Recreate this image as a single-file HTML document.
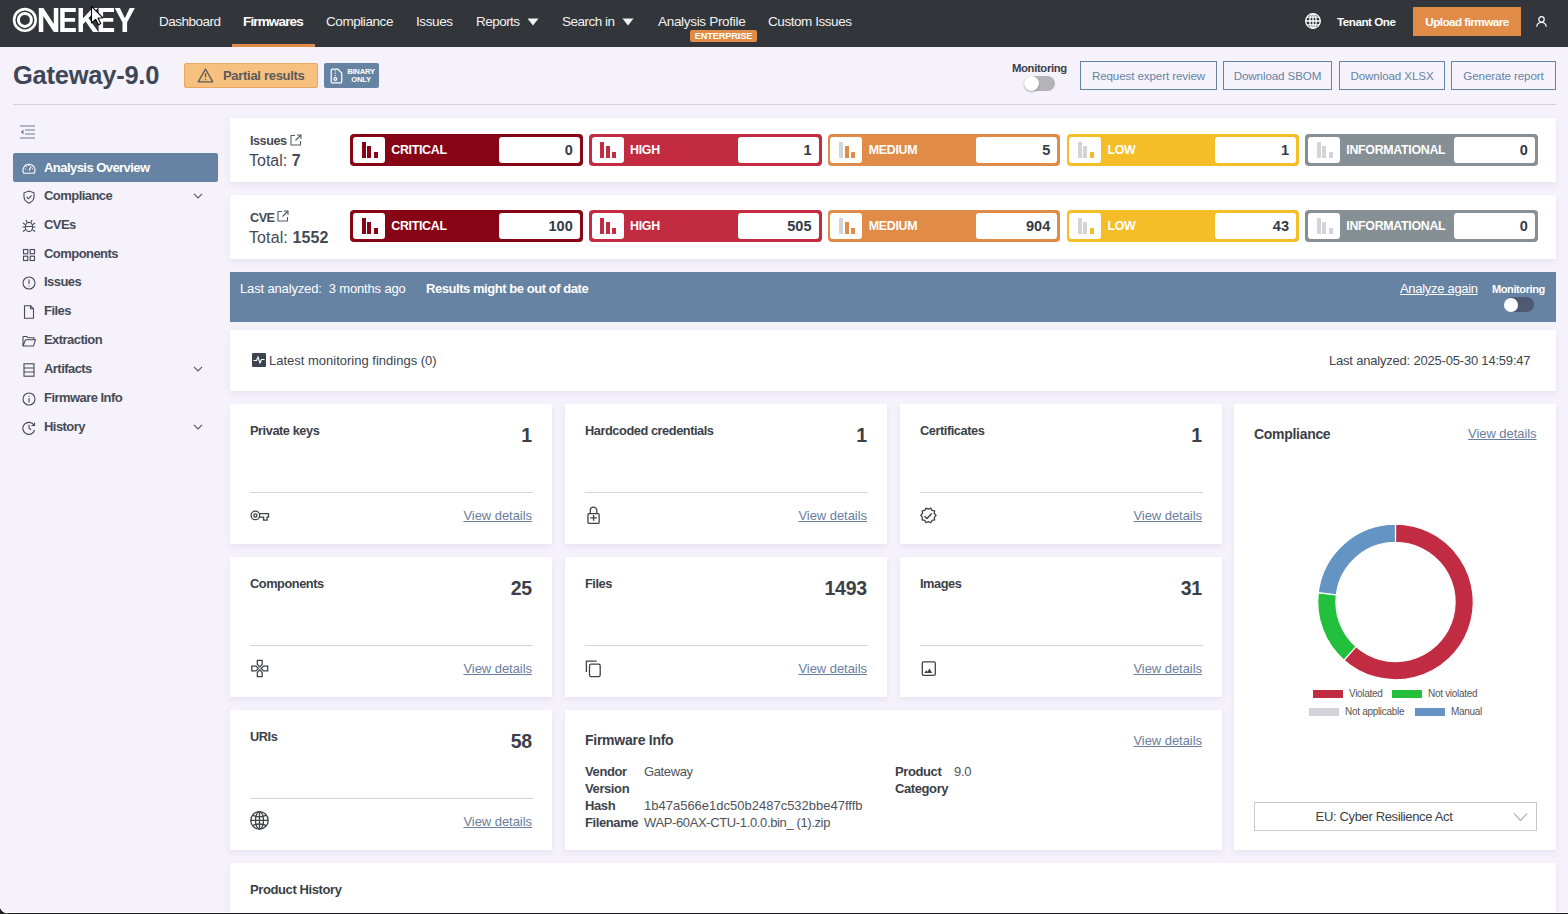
<!DOCTYPE html>
<html><head><meta charset="utf-8">
<style>
*{box-sizing:border-box;margin:0;padding:0}
html,body{width:1568px;height:914px;overflow:hidden}
body{background:#f5f2fc;font-family:"Liberation Sans",sans-serif;color:#3d4450;position:relative}
.a{position:absolute;white-space:nowrap}
#hdr{position:absolute;left:0;top:0;width:1568px;height:47px;background:#32363b}
.nav{position:absolute;top:13.5px;font-size:13.5px;color:#f2f2f2;line-height:16px}
.card{position:absolute;background:#fff;box-shadow:0 3px 6px rgba(120,110,160,0.10)}
.sev{position:absolute;width:232.5px;height:32px;border-radius:4px}
.sev .ic{position:absolute;left:2.6px;top:2.6px;width:32px;height:26.4px;background:#fff;border-radius:3px}
.sev .ic i{position:absolute;bottom:5px;width:4px}
.sev .lb{position:absolute;left:41px;top:9px;font-size:12.4px;font-weight:700;color:#fff;line-height:14px;letter-spacing:-0.3px}
.sev .nb{position:absolute;right:3px;top:2.6px;width:81px;height:26.4px;background:#fff;border-radius:3px;text-align:right;padding-right:7px;font-size:14.5px;font-weight:700;color:#333a45;line-height:27px}
.side{position:absolute;left:44px;font-size:13px;font-weight:700;color:#454a55;line-height:16px;letter-spacing:-0.55px}
.sico{position:absolute;left:21.5px;width:14px;height:14px}
.chev{position:absolute;left:193px;width:10px;height:6px}
.btn{position:absolute;top:61px;height:29px;border:1.5px solid #6783a3;color:#6783a3;font-size:11.6px;text-align:center;line-height:28px;letter-spacing:-0.1px}
.ct{position:absolute;left:20px;top:19px;font-size:12.8px;font-weight:700;color:#3b3f48;letter-spacing:-0.45px;line-height:16px}
.cn{position:absolute;right:20px;top:18.5px;font-size:19.5px;font-weight:700;color:#3b3f48;line-height:24px;letter-spacing:-0.2px}
.cd{position:absolute;left:20px;right:19px;top:88px;height:1px;background:#d4d4d8}
.vd{position:absolute;right:20px;top:104px;font-size:13px;color:#6a7e9e;text-decoration:underline;line-height:16px;letter-spacing:-0.05px}
.cico{position:absolute;left:20px;top:104px;width:20px;height:16px}
</style></head><body>

<div id="hdr">
<svg class="a" style="left:0;top:0" width="140" height="40" viewBox="0 0 140 40">
<g fill="#fff">
<circle cx="24.9" cy="19.9" r="10.8" fill="none" stroke="#fff" stroke-width="2.6"/><circle cx="24.9" cy="19.9" r="6.5" fill="none" stroke="#fff" stroke-width="3"/>

<path d="M38.8 7.9h4.6l10.4 16.2V7.9h4.5v24.1h-4.5L43.3 15.9v16.1h-4.5z"/>
<path d="M60.2 7.9h15.6v4h-11.1v6h10.4v3.8h-10.4v6.3h11.2v4h-15.7z"/>
<path d="M78.5 7.9h4.5v10.4l9.6-10.4h5.3l-9.5 10.2l10 13.9h-5.4l-7.3-10.6l-2.7 2.8v7.8h-4.5z"/>
<path d="M98.6 7.9h15.4v4h-10.9v6h10.2v3.8h-10.2v6.3h11v4h-15.5z"/>
<path d="M114.8 7.9h5.1l4.9 10.4l4.9-10.4h5.1l-7.7 14.6v9.5h-4.6v-9.5z"/>
</g>
<path d="M91.5 6.3v16.6l4.1-3.6l3 5.4l2.2-1.1l-2.8-5.3l5-0.5z" fill="#fff" stroke="#000" stroke-width="1.1" stroke-linejoin="round"/>
</svg>
<div class="nav" style="left:159px;letter-spacing:-0.5px">Dashboard</div>
<div class="nav" style="left:243px;font-weight:700;color:#fff;letter-spacing:-0.85px">Firmwares</div>
<div class="a" style="left:232px;top:44px;width:83px;height:3px;background:#e08c48"></div>
<div class="nav" style="left:326px;letter-spacing:-0.43px">Compliance</div>
<div class="nav" style="left:416px;letter-spacing:-0.4px">Issues</div>
<div class="nav" style="left:476px;letter-spacing:-0.53px">Reports</div>
<svg class="a" style="left:527px;top:18px" width="12" height="8"><path d="M0.5 0.5h11l-5.5 7z" fill="#f2f2f2"/></svg>
<div class="nav" style="left:562px;letter-spacing:-0.5px">Search in</div>
<svg class="a" style="left:622px;top:18px" width="12" height="8"><path d="M0.5 0.5h11l-5.5 7z" fill="#f2f2f2"/></svg>
<div class="nav" style="left:658px;letter-spacing:-0.31px">Analysis Profile</div>
<div class="a" style="left:690px;top:30px;width:67px;height:12px;background:#e08c48;border-radius:2px;color:#fff;font-size:9.2px;font-weight:700;line-height:12px;text-align:center;letter-spacing:-0.1px">ENTERPRISE</div>
<div class="nav" style="left:768px;letter-spacing:-0.44px">Custom Issues</div>
<svg class="a" style="left:1304px;top:12px" width="18" height="18" viewBox="0 0 18 18" fill="none" stroke="#fff" stroke-width="1.3"><circle cx="9" cy="9" r="7.3"/><ellipse cx="9" cy="9" rx="3.2" ry="7.3"/><path d="M1.7 9h14.6M9 1.7v14.6M2.8 5.2h12.4M2.8 12.8h12.4"/></svg>
<div class="a" style="left:1337px;top:14.8px;font-size:11.6px;font-weight:700;color:#fff;line-height:14px;letter-spacing:-0.45px">Tenant One</div>
<div class="a" style="left:1413px;top:7px;width:108px;height:29px;background:#e08c48;color:#fff;font-size:11.8px;font-weight:700;line-height:31px;text-align:center;letter-spacing:-0.6px">Upload firmware</div>
<svg class="a" style="left:1536px;top:16px" width="11" height="11" viewBox="0 0 11 11" fill="none" stroke="#fff" stroke-width="1.2"><circle cx="5.5" cy="3.4" r="2.7"/><path d="M0.8 10.8c0-2.8 2-4.3 4.7-4.3s4.7 1.5 4.7 4.3"/></svg>
</div>


<!-- title row -->
<div class="a" style="left:13px;top:60px;font-size:25.5px;font-weight:700;color:#3d4756;line-height:30px;letter-spacing:-0.25px">Gateway-9.0</div>
<div class="a" style="left:184px;top:63px;width:134px;height:25px;background:#f6c17e;border:1px solid #eaa860;border-radius:2px"></div>
<svg class="a" style="left:197px;top:68px" width="17" height="15" viewBox="0 0 17 15" fill="none" stroke="#5b5b5b" stroke-width="1.3"><path d="M8.5 1.2L15.8 13.8H1.2z" stroke-linejoin="round"/><path d="M8.5 5.3v4.3M8.5 11v1.2"/></svg>
<div class="a" style="left:223px;top:68px;font-size:13px;font-weight:700;color:#5a5a5c;line-height:16px;letter-spacing:-0.3px">Partial results</div>
<div class="a" style="left:324px;top:63px;width:55px;height:25px;background:#6783a3;border-radius:2px"></div>
<svg class="a" style="left:330px;top:67.5px" width="13" height="16" viewBox="0 0 13 16" fill="none" stroke="#fff" stroke-width="1.2"><path d="M1.2 2.2a1 1 0 0 1 1-1h5.6l3.9 3.9v8.7a1 1 0 0 1-1 1H2.2a1 1 0 0 1-1-1z"/><path d="M5.2 2.2v1.2M5.2 4.6v1.2M5.2 7v1.2" stroke-width="1"/><circle cx="5.3" cy="11" r="1.4"/></svg>
<div class="a" style="left:346px;top:68px;font-size:7.6px;font-weight:700;color:#fff;line-height:8px;text-align:center;width:30px;letter-spacing:-0.2px">BINARY<br>ONLY</div>

<div class="a" style="left:1012px;top:62px;font-size:11.3px;font-weight:700;color:#3d3f47;line-height:13px;letter-spacing:-0.35px">Monitoring</div>
<div class="a" style="left:1024px;top:76px;width:31px;height:15px;background:#b4b4b8;border-radius:8px"></div>
<div class="a" style="left:1024px;top:76px;width:15px;height:15px;background:#fff;border-radius:50%;box-shadow:0 1px 2px rgba(0,0,0,0.3)"></div>
<div class="btn" style="left:1080px;width:137px">Request expert review</div>
<div class="btn" style="left:1223px;width:109px">Download SBOM</div>
<div class="btn" style="left:1339px;width:106px">Download XLSX</div>
<div class="btn" style="left:1451px;width:105px">Generate report</div>
<div class="a" style="left:13px;top:104px;width:1543px;height:1px;background:#d2d0dc"></div>

<!-- sidebar -->
<svg class="a" style="left:20px;top:125px" width="15" height="14" viewBox="0 0 15 14" fill="none" stroke="#6b7a90" stroke-width="1.2"><path d="M0 1h15M5 5h10M5 9h10M0 13h15"/><path d="M3.5 4.5L0.8 7l2.7 2.5z" fill="#6b7a90" stroke="none"/></svg>
<div class="a" style="left:13px;top:153px;width:205px;height:29px;background:#6783a3;border-radius:2px"></div>
<svg class="sico" style="top:161.5px" viewBox="0 0 14 14" fill="none" stroke="#fff" stroke-width="1.1"><path d="M1.8 11.2A6 6 0 1 1 12.2 11.2z"/><path d="M7 8.5L9.2 4.5"/><path d="M3 7h1M10 7h1M7 3v1M4.3 4.3l0.6 0.6"/></svg>
<div class="side" style="top:159.5px;color:#fff">Analysis Overview</div>
<svg class="sico" style="top:189.5px" viewBox="0 0 14 14" fill="none" stroke="#454a55" stroke-width="1.1"><path d="M7 1L12 2.8v4c0 3-2.2 5.2-5 6.4C4.2 12 2 9.8 2 6.8v-4z"/><path d="M4.6 7l1.8 1.8L9.6 5.4"/></svg>
<div class="side" style="top:187.5px">Compliance</div>
<svg class="chev" style="top:193px" viewBox="0 0 10 6" fill="none" stroke="#555a66" stroke-width="1.2"><path d="M1 0.8l4 4 4-4"/></svg>
<svg class="sico" style="top:218.5px" viewBox="0 0 14 14" fill="none" stroke="#454a55" stroke-width="1.1"><ellipse cx="7" cy="8" rx="3.6" ry="4.6"/><path d="M3.4 7.5h7.2M0.5 8h2.8M10.7 8h2.8M1 4l2.5 1.8M13 4l-2.5 1.8M1 12.5l2.5-1.8M13 12.5l-2.5-1.8M5 3.5L4 1M9 3.5L10 1"/></svg>
<div class="side" style="top:216.5px">CVEs</div>
<svg class="sico" style="top:247.5px" viewBox="0 0 14 14" fill="none" stroke="#454a55" stroke-width="1.1"><rect x="1.5" y="1.5" width="4.3" height="4.3"/><rect x="8.2" y="1.5" width="4.3" height="4.3"/><rect x="1.5" y="8.2" width="4.3" height="4.3"/><rect x="8.2" y="8.2" width="4.3" height="4.3"/></svg>
<div class="side" style="top:245.5px">Components</div>
<svg class="sico" style="top:275.5px" viewBox="0 0 14 14" fill="none" stroke="#454a55" stroke-width="1.1"><circle cx="7" cy="7" r="6"/><path d="M7 3.5v4.5M7 9.5v1"/></svg>
<div class="side" style="top:273.5px">Issues</div>
<svg class="sico" style="top:304.5px" viewBox="0 0 14 14" fill="none" stroke="#454a55" stroke-width="1.1"><path d="M2.5 0.8h6l3 3v9.4h-9z"/><path d="M8.5 0.8v3h3"/></svg>
<div class="side" style="top:302.5px">Files</div>
<svg class="sico" style="top:333.5px" viewBox="0 0 14 14" fill="none" stroke="#454a55" stroke-width="1.1"><path d="M1 2.5h4l1 1.3h6v2"/><path d="M1 2.5v9.5h10.5l2-6.2H3.5L1 12"/></svg>
<div class="side" style="top:331.5px">Extraction</div>
<svg class="sico" style="top:362.5px" viewBox="0 0 14 14" fill="none" stroke="#454a55" stroke-width="1.1"><rect x="2" y="0.8" width="10" height="12.4"/><path d="M2 5h10M2 9h10"/></svg>
<div class="side" style="top:360.5px">Artifacts</div>
<svg class="chev" style="top:366px" viewBox="0 0 10 6" fill="none" stroke="#555a66" stroke-width="1.2"><path d="M1 0.8l4 4 4-4"/></svg>
<svg class="sico" style="top:391.5px" viewBox="0 0 14 14" fill="none" stroke="#454a55" stroke-width="1.1"><circle cx="7" cy="7" r="6"/><path d="M7 6v4.5M7 3.8v1"/></svg>
<div class="side" style="top:389.5px">Firmware Info</div>
<svg class="sico" style="top:420.5px" viewBox="0 0 14 14" fill="none" stroke="#454a55" stroke-width="1.1"><path d="M12.6 9A6 6 0 1 1 12 4.3"/><path d="M12.5 1.5v3h-3"/><path d="M7 3.8V7l2 1.8"/></svg>
<div class="side" style="top:418.5px">History</div>
<svg class="chev" style="top:424px" viewBox="0 0 10 6" fill="none" stroke="#555a66" stroke-width="1.2"><path d="M1 0.8l4 4 4-4"/></svg>


<div class="card" style="left:230px;top:118px;width:1326px;height:64px"></div>
<div class="a" style="left:250px;top:134px;font-size:12.6px;font-weight:700;color:#454a55;line-height:15px;letter-spacing:-0.45px">Issues</div>
<svg class="a" style="left:290px;top:134px" width="12" height="12" viewBox="0 0 12 12" fill="none" stroke="#555a66" stroke-width="1.1"><path d="M5 1.5H1v9.5h9.5V7"/><path d="M7 1h4v4M11 1L5.5 6.5"/></svg>
<div class="a" style="left:249px;top:152px;font-size:16px;color:#454a55;line-height:18px">Total: <b>7</b></div>
<div class="sev" style="left:350.25px;top:134px;background:#870417"><div class="ic"><i style="left:8.7px;height:16px;background:#870417"></i><i style="left:14.4px;height:12px;background:#870417"></i><i style="left:20.8px;height:6px;background:#870417"></i></div><div class="lb">CRITICAL</div><div class="nb">0</div></div>
<div class="sev" style="left:589px;top:134px;background:#c22b40"><div class="ic"><i style="left:8.7px;height:16px;background:#c22b40"></i><i style="left:14.4px;height:12px;background:#c22b40"></i><i style="left:20.8px;height:6px;background:#c22b40"></i></div><div class="lb">HIGH</div><div class="nb">1</div></div>
<div class="sev" style="left:827.75px;top:134px;background:#e08c48"><div class="ic"><i style="left:8.7px;height:16px;background:#d3d3d8"></i><i style="left:14.4px;height:12px;background:#e08c48"></i><i style="left:20.8px;height:6px;background:#e08c48"></i></div><div class="lb">MEDIUM</div><div class="nb">5</div></div>
<div class="sev" style="left:1066.5px;top:134px;background:#f5be28"><div class="ic"><i style="left:8.7px;height:16px;background:#d3d3d8"></i><i style="left:14.4px;height:12px;background:#d3d3d8"></i><i style="left:20.8px;height:6px;background:#f5be28"></i></div><div class="lb">LOW</div><div class="nb">1</div></div>
<div class="sev" style="left:1305.25px;top:134px;background:#868f93"><div class="ic"><i style="left:8.7px;height:16px;background:#d3d3d8"></i><i style="left:14.4px;height:12px;background:#d3d3d8"></i><i style="left:20.8px;height:6px;background:#d3d3d8"></i></div><div class="lb">INFORMATIONAL</div><div class="nb">0</div></div>

<div class="card" style="left:230px;top:195px;width:1326px;height:64px"></div>
<div class="a" style="left:250px;top:211px;font-size:12.6px;font-weight:700;color:#454a55;line-height:15px;letter-spacing:-0.45px">CVE</div>
<svg class="a" style="left:277px;top:210px" width="12" height="12" viewBox="0 0 12 12" fill="none" stroke="#555a66" stroke-width="1.1"><path d="M5 1.5H1v9.5h9.5V7"/><path d="M7 1h4v4M11 1L5.5 6.5"/></svg>
<div class="a" style="left:249px;top:229px;font-size:16px;color:#454a55;line-height:18px;letter-spacing:0.1px">Total: <b>1552</b></div>
<div class="sev" style="left:350.25px;top:210px;background:#870417"><div class="ic"><i style="left:8.7px;height:16px;background:#870417"></i><i style="left:14.4px;height:12px;background:#870417"></i><i style="left:20.8px;height:6px;background:#870417"></i></div><div class="lb">CRITICAL</div><div class="nb">100</div></div>
<div class="sev" style="left:589px;top:210px;background:#c22b40"><div class="ic"><i style="left:8.7px;height:16px;background:#c22b40"></i><i style="left:14.4px;height:12px;background:#c22b40"></i><i style="left:20.8px;height:6px;background:#c22b40"></i></div><div class="lb">HIGH</div><div class="nb">505</div></div>
<div class="sev" style="left:827.75px;top:210px;background:#e08c48"><div class="ic"><i style="left:8.7px;height:16px;background:#d3d3d8"></i><i style="left:14.4px;height:12px;background:#e08c48"></i><i style="left:20.8px;height:6px;background:#e08c48"></i></div><div class="lb">MEDIUM</div><div class="nb">904</div></div>
<div class="sev" style="left:1066.5px;top:210px;background:#f5be28"><div class="ic"><i style="left:8.7px;height:16px;background:#d3d3d8"></i><i style="left:14.4px;height:12px;background:#d3d3d8"></i><i style="left:20.8px;height:6px;background:#f5be28"></i></div><div class="lb">LOW</div><div class="nb">43</div></div>
<div class="sev" style="left:1305.25px;top:210px;background:#868f93"><div class="ic"><i style="left:8.7px;height:16px;background:#d3d3d8"></i><i style="left:14.4px;height:12px;background:#d3d3d8"></i><i style="left:20.8px;height:6px;background:#d3d3d8"></i></div><div class="lb">INFORMATIONAL</div><div class="nb">0</div></div>

<div class="a" style="left:230px;top:272px;width:1326px;height:50px;background:#6783a3"></div>
<div class="a" style="left:240px;top:281px;font-size:13px;color:#fff;line-height:16px;letter-spacing:-0.15px">Last analyzed:&nbsp; 3 months ago</div>
<div class="a" style="left:426px;top:281px;font-size:13px;font-weight:700;color:#fff;line-height:16px;letter-spacing:-0.45px">Results might be out of date</div>
<div class="a" style="left:1400px;top:281px;font-size:13px;color:#fff;line-height:16px;letter-spacing:-0.3px;text-decoration:underline">Analyze again</div>
<div class="a" style="left:1492px;top:283px;font-size:11px;font-weight:700;color:#fff;line-height:13px;letter-spacing:-0.4px">Monitoring</div>
<div class="a" style="left:1505px;top:297px;width:29px;height:15px;background:#4e5a72;border-radius:8px"></div>
<div class="a" style="left:1504px;top:298px;width:14px;height:14px;background:#fff;border-radius:50%"></div>

<div class="card" style="left:230px;top:330px;width:1326px;height:61px"></div>
<svg class="a" style="left:252px;top:353px" width="14" height="14" viewBox="0 0 14 14"><rect width="14" height="14" rx="1" fill="#3d4450"/><path d="M1.5 7.5h3l1.5-3.5 2 6 1.5-3.5h3" fill="none" stroke="#fff" stroke-width="1.1"/></svg>
<div class="a" style="left:269px;top:353px;font-size:13px;color:#3d4450;line-height:16px">Latest monitoring findings (0)</div>
<div class="a" style="left:1329px;top:353px;font-size:13px;color:#3d4450;line-height:16px;letter-spacing:-0.2px">Last analyzed: 2025-05-30 14:59:47</div>
<div class="card" style="left:230px;top:404px;width:322px;height:140px"><div class="ct">Private keys</div><div class="cn">1</div><div class="cd"></div><svg class="a" style="left:0;top:0" width="60" height="140" fill="none" stroke="#404248" stroke-width="1.3"><circle cx="25.4" cy="111.4" r="4.3"/><circle cx="25.4" cy="111.4" r="1.6"/><path d="M29.3 109.6h9.2v3.6h-1.4v3h-3.5v-3h-4.3"/></svg><div class="vd">View details</div></div>
<div class="card" style="left:565px;top:404px;width:322px;height:140px"><div class="ct">Hardcoded credentials</div><div class="cn">1</div><div class="cd"></div><svg class="a" style="left:0;top:0" width="60" height="140" fill="none" stroke="#404248" stroke-width="1.3"><rect x="22.95" y="109.65" width="11.2" height="9.7" rx="1"/><path d="M25.3 109.6v-3.2a3.25 3.25 0 0 1 6.5 0v3.2"/><path d="M28.6 111v5.8M25.3 113.9h6.6" stroke-width="1.4"/></svg><div class="vd">View details</div></div>
<div class="card" style="left:900px;top:404px;width:322px;height:140px"><div class="ct">Certificates</div><div class="cn">1</div><div class="cd"></div><svg class="a" style="left:0;top:0" width="60" height="140" fill="none" stroke="#404248" stroke-width="1.3" stroke-linejoin="round"><path d="M36.10 111.40L34.30 113.32L34.63 115.93L32.04 116.42L30.78 118.72L28.40 117.60L26.02 118.72L24.76 116.42L22.17 115.93L22.50 113.32L20.70 111.40L22.50 109.48L22.17 106.87L24.76 106.38L26.02 104.08L28.40 105.20L30.78 104.08L32.04 106.38L34.63 106.87L34.30 109.48z"/><path d="M24.6 112.2l2.3 2.3 5-5" stroke-width="1.5"/></svg><div class="vd">View details</div></div>
<div class="card" style="left:230px;top:557px;width:322px;height:140px"><div class="ct">Components</div><div class="cn">25</div><div class="cd"></div><svg class="a" style="left:0;top:0" width="60" height="140" fill="none" stroke="#404248" stroke-width="1.3" stroke-linejoin="miter"><path d="M27.35 103.3h4.8v4.2l-2.4 2.4-2.4-2.4z"/><path d="M27.35 119.6h4.8v-4.2l-2.4-2.4-2.4 2.4z"/><path d="M21.8 109.1v4.8h4.2l2.4-2.4-2.4-2.4z"/><path d="M37.7 109.1v4.8h-4.2l-2.4-2.4 2.4-2.4z"/></svg><div class="vd">View details</div></div>
<div class="card" style="left:565px;top:557px;width:322px;height:140px"><div class="ct">Files</div><div class="cn">1493</div><div class="cd"></div><svg class="a" style="left:0;top:0" width="60" height="140" fill="none" stroke="#404248" stroke-width="1.3"><path d="M21.4 115V104.1h10.2"/><rect x="24.5" y="107.1" width="10.7" height="12.6" rx="1.6"/></svg><div class="vd">View details</div></div>
<div class="card" style="left:900px;top:557px;width:322px;height:140px"><div class="ct">Images</div><div class="cn">31</div><div class="cd"></div><svg class="a" style="left:0;top:0" width="60" height="140" fill="none" stroke="#404248" stroke-width="1.3"><rect x="22.3" y="104.9" width="13" height="13.4" rx="1.4"/><path d="M24.3 116l1.9-2.8 1.2 1.6 2.1-3.2 2.7 4.4z" fill="#404248" stroke="none"/></svg><div class="vd">View details</div></div>
<div class="card" style="left:230px;top:710px;width:322px;height:140px"><div class="ct">URIs</div><div class="cn">58</div><div class="cd"></div><svg class="a" style="left:0;top:0" width="60" height="140" fill="none" stroke="#404248" stroke-width="1.3"><circle cx="29.5" cy="110.4" r="8.7"/><ellipse cx="29.5" cy="110.4" rx="4" ry="8.7"/><path d="M20.8 110.4h17.4M29.5 101.7v17.4"/><path d="M22.5 105.2q7 3.2 14 0M22.5 115.6q7-3.2 14 0"/></svg><div class="vd">View details</div></div>

<div class="card" style="left:565px;top:710px;width:657px;height:140px"></div>
<div class="a" style="left:585px;top:732px;font-size:14px;font-weight:700;color:#3b3f48;line-height:16px;letter-spacing:-0.26px">Firmware Info</div>
<div class="a" style="left:799px;top:733px;font-size:13px;color:#6a7e9e;text-decoration:underline;line-height:16px;letter-spacing:-0.05px;width:403px;text-align:right">View details</div>
<div class="a" style="left:585px;top:763px;font-size:13px;font-weight:700;color:#3d434d;line-height:17px;letter-spacing:-0.4px">Vendor<br>Version<br>Hash<br>Filename</div>
<div class="a" style="left:644px;top:763px;font-size:13px;color:#4f5359;line-height:17px;letter-spacing:-0.37px">Gateway<br>&nbsp;<br><span style="letter-spacing:0">1b47a566e1dc50b2487c532bbe47fffb</span><br>WAP-60AX-CTU-1.0.0.bin_ (1).zip</div>
<div class="a" style="left:895px;top:763px;font-size:13px;font-weight:700;color:#3b3f48;line-height:17px;letter-spacing:-0.4px">Product<br>Category</div>
<div class="a" style="left:954px;top:763px;font-size:13px;color:#4f5359;line-height:17px;letter-spacing:-0.3px">9.0</div>

<div class="card" style="left:1234px;top:404px;width:322px;height:446px"></div>
<div class="a" style="left:1254px;top:426px;font-size:14px;font-weight:700;color:#3b3f48;line-height:16px;letter-spacing:-0.3px">Compliance</div>
<div class="a" style="left:1468px;top:426px;font-size:13px;color:#6a7e9e;text-decoration:underline;line-height:16px;letter-spacing:-0.05px">View details</div>
<svg class="a" style="left:0;top:0" width="1568" height="914"><path d="M1395.50 524.20A77.8 77.8 0 1 1 1343.91 660.23L1355.98 646.61A59.6 59.6 0 1 0 1395.50 542.40z" fill="#c22c42" stroke="#fff" stroke-width="1.2"/><path d="M1343.91 660.23A77.8 77.8 0 0 1 1318.27 592.62L1336.33 594.82A59.6 59.6 0 0 0 1355.98 646.61z" fill="#22c03c" stroke="#fff" stroke-width="1.2"/><path d="M1318.27 592.62A77.8 77.8 0 0 1 1395.50 524.20L1395.50 542.40A59.6 59.6 0 0 0 1336.33 594.82z" fill="#6494c3" stroke="#fff" stroke-width="1.2"/></svg>
<div class="a" style="left:1313px;top:690px;width:30px;height:8px;background:#c22c42"></div>
<div class="a" style="left:1349px;top:688px;font-size:10px;color:#555;line-height:12px;letter-spacing:-0.3px">Violated</div>
<div class="a" style="left:1392px;top:690px;width:30px;height:8px;background:#22c03c"></div>
<div class="a" style="left:1428px;top:688px;font-size:10px;color:#555;line-height:12px;letter-spacing:-0.3px">Not violated</div>
<div class="a" style="left:1309px;top:708px;width:30px;height:8px;background:#d4d3da"></div>
<div class="a" style="left:1345px;top:706px;font-size:10px;color:#555;line-height:12px;letter-spacing:-0.3px">Not applicable</div>
<div class="a" style="left:1415px;top:708px;width:30px;height:8px;background:#6494c3"></div>
<div class="a" style="left:1451px;top:706px;font-size:10px;color:#555;line-height:12px;letter-spacing:-0.3px">Manual</div>
<div class="a" style="left:1254px;top:802px;width:283px;height:29px;border:1px solid #c9c9cc;background:#fff"></div>
<div class="a" style="left:1254px;top:809px;width:260px;font-size:13px;color:#3b3f48;line-height:16px;letter-spacing:-0.35px;text-align:center">EU: Cyber Resilience Act</div>
<svg class="a" style="left:1513px;top:812px" width="15" height="10" viewBox="0 0 15 10" fill="none" stroke="#b8b8bc" stroke-width="1.3"><path d="M1 1.5l6.5 7 6.5-7"/></svg>

<div class="card" style="left:230px;top:863px;width:1326px;height:60px"></div>
<div class="a" style="left:250px;top:882px;font-size:13px;font-weight:700;color:#3b3f48;line-height:16px;letter-spacing:-0.4px">Product History</div>
<div class="a" style="left:0;top:912px;width:1568px;height:1px;background:#fff"></div><div class="a" style="left:0;top:913px;width:1568px;height:1px;background:#1e1e22"></div>



<svg class="a" style="left:0;top:900px" width="12" height="14"><path d="M0 5.5Q0.8 12.6 7.5 13L0 14z" fill="#1e1e22"/><path d="M0 5.5Q0.8 12.6 7.5 13" fill="none" stroke="#fff" stroke-width="1"/></svg>
</body></html>
